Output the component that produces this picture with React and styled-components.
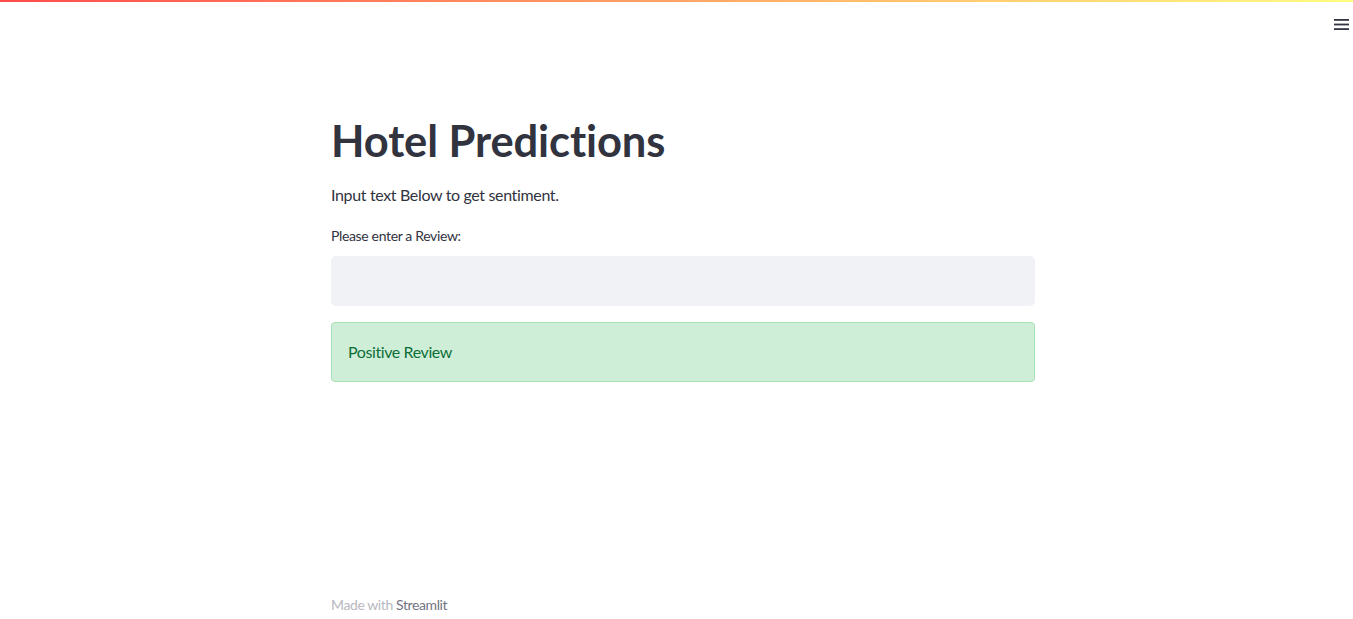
import React from 'react'
import styled, { createGlobalStyle } from 'styled-components'

const GlobalStyle = createGlobalStyle`
  html, body {
    margin: 0;
    padding: 0;
    background: #ffffff;
  }
  body {
    font-family: Lato, "Noto Sans", sans-serif;
    color: #31333f;
  }
`

const Page = styled.div`
  position: relative;
  height: 619px;
  display: flex;
  flex-direction: column;
  overflow: hidden;
`

const Decoration = styled.div`
  height: 2px;
  background: linear-gradient(90deg, #ff4b4b, #fffd80);
`

const Toolbar = styled.header`
  display: flex;
  justify-content: flex-end;
  padding: 12px 2px 0 0;
  height: 24px;
`

const MenuButton = styled.button`
  border: none;
  background: none;
  padding: 0;
  width: 20px;
  height: 20px;
  display: flex;
  align-items: center;
  justify-content: center;
  cursor: pointer;
`

const Body = styled.div`
  flex: 1;
  display: flex;
  justify-content: center;
  padding-left: 13px;
`

const Main = styled.main`
  display: flex;
  flex-direction: column;
  width: 704px;
  padding-top: 74px;
  box-sizing: border-box;
`

const Title = styled.h1`
  margin: 0;
  font-size: 43.5px;
  font-weight: 700;
  line-height: 1.3;
  letter-spacing: -0.1px;
  color: #31333f;
`

const Text = styled.p`
  margin: 13px 0 0;
  font-size: 16px;
  line-height: 1.6;
  letter-spacing: -0.35px;
`

const Label = styled.label`
  display: block;
  margin-top: 18px;
  font-size: 14px;
  line-height: 1.6;
  letter-spacing: -0.35px;
`

const Input = styled.input`
  margin-top: 8px;
  height: 50px;
  width: 100%;
  box-sizing: border-box;
  border: none;
  border-radius: 5px;
  background: #f0f2f6;
  padding: 0 12px;
  font: inherit;
  outline: none;
`

const Alert = styled.div`
  margin-top: 16px;
  height: 60px;
  box-sizing: border-box;
  display: flex;
  align-items: center;
  padding: 0 16px;
  border: 1px solid #a6e2b8;
  border-radius: 4px;
  background: #cfeed8;
  color: #0e6e38;
  font-size: 16px;
  letter-spacing: -0.4px;
`

const Footer = styled.footer`
  margin-top: auto;
  padding-bottom: 3px;
  font-size: 14px;
  line-height: 1.6;
  letter-spacing: -0.4px;
  color: #b8b8c0;
  span {
    color: #70737f;
  }
`

function HamburgerIcon() {
  return (
    <svg width="15" height="11" viewBox="0 0 15 11">
      <rect x="0" y="0" width="15" height="1.8" fill="#31333f" />
      <rect x="0" y="4.6" width="15" height="1.8" fill="#31333f" />
      <rect x="0" y="9.2" width="15" height="1.8" fill="#31333f" />
    </svg>
  )
}

export default function App() {
  return (
    <Page>
      <GlobalStyle />
      <Decoration />
      <Toolbar>
        <MenuButton aria-label="Main menu">
          <HamburgerIcon />
        </MenuButton>
      </Toolbar>
      <Body>
        <Main>
          <Title>Hotel Predictions</Title>
          <Text>Input text Below to get sentiment.</Text>
          <Label>Please enter a Review:</Label>
          <Input />
          <Alert>Positive Review</Alert>
          <Footer>
            Made with <span>Streamlit</span>
          </Footer>
        </Main>
      </Body>
    </Page>
  )
}
